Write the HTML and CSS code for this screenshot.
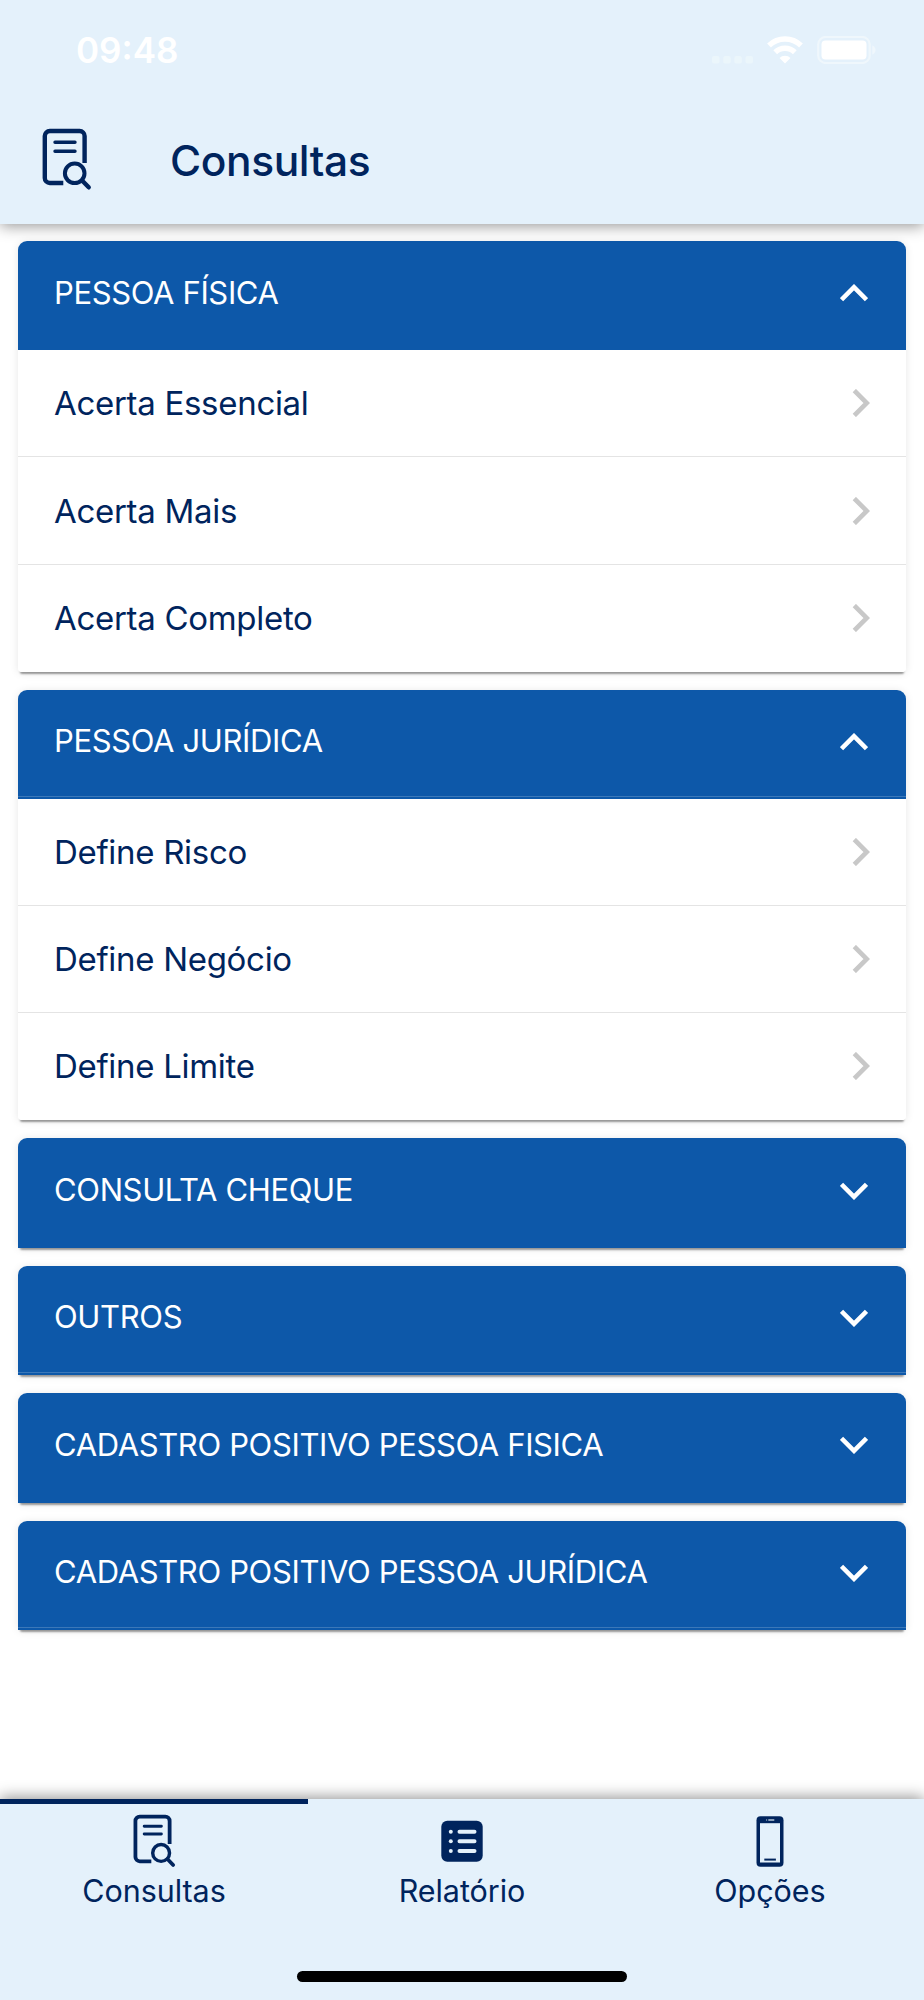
FILE: index.html
```
<!DOCTYPE html>
<html lang="pt-BR">
  <head>
    <meta charset="UTF-8" />
    <meta name="viewport" content="width=device-width, initial-scale=1.0" />
    <title>Consultas</title>
    <link rel="stylesheet" href="styles.css">
  </head>

  <body>
    <!-- shared icons -->
    <svg class="sprite" width="0" height="0">
      <symbol id="doc_search" viewBox="0 0 50 64">
        <g fill="none" stroke="currentColor" stroke-linecap="round">
          <path stroke-width="4.4" stroke-linecap="butt" d="M42.6 35V8a5 5 0 0 0-5-5H7.8a5 5 0 0 0-5 5v42a5 5 0 0 0 5 5H21.3" />
          <path stroke-width="3.4" d="M13 14.3h20M13 23.3h20" />
          <circle cx="32.7" cy="45.3" r="9.8" stroke-width="4" />
          <path stroke-width="4.4" d="M40.3 52.7l6.4 6.6" />
        </g>
      </symbol>
      <symbol id="chevron_up" viewBox="0 0 28 18">
        <path fill="none" stroke="currentColor" stroke-width="4.6" d="M1.5 15.7L14 3.2l12.5 12.5" />
      </symbol>
      <symbol id="chevron_down" viewBox="0 0 28 18">
        <path fill="none" stroke="currentColor" stroke-width="4.6" d="M1.5 2.3L14 14.8 26.5 2.3" />
      </symbol>
      <symbol id="chevron_right" viewBox="0 0 18 28">
        <path fill="none" stroke="currentColor" stroke-width="4.6" d="M2.3 1.5L14.8 14 2.3 26.5" />
      </symbol>
    </svg>

    <div class="main">
      <header class="header">
        <div class="status_bar">
          <span class="time">09:48</span>
          <div class="status_icons">
            <svg class="signal" width="42" height="8" viewBox="0 0 42 8" fill="#ebf6fb">
              <rect x="0" width="7.5" height="7.5" rx="2" />
              <rect x="11.2" width="7.5" height="7.5" rx="2" />
              <rect x="22.3" width="7.5" height="7.5" rx="2" />
              <rect x="33.5" width="7.5" height="7.5" rx="2" />
            </svg>
            <svg class="wifi" width="36" height="28" viewBox="0 0 36 28">
              <g fill="none" stroke="#fff" stroke-width="5.4">
                <path d="M2 9.5a23 23 0 0 1 32 0" />
                <path d="M8.2 16.2a14 14 0 0 1 19.6 0" />
              </g>
              <path fill="#fff" d="M18 27.500l-5.500-5.500a7.800 7.800 0 0 1 11 0z" />
            </svg>
            <svg class="battery" width="59" height="28" viewBox="0 0 59 28">
              <rect x="1.2" y="1" width="51.5" height="26" rx="7.5" fill="none" stroke="#eff7fc" stroke-width="2.200" />
              <rect x="4.5" y="4.5" width="45" height="19" rx="4" fill="#fff" />
              <path fill="#eff7fc" d="M55.3 9.500q3.200 1.200 3.200 4.600t-3.200 4.600z" />
            </svg>
          </div>
        </div>
        <div class="title_bar">
          <svg class="title_icon" width="50" height="64"><use href="#doc_search" /></svg>
          <h1>Consultas</h1>
        </div>
      </header>

      <div class="content">
        <section class="card">
          <div class="card_head"><span>PESSOA FÍSICA</span><svg width="28" height="18"><use href="#chevron_up" /></svg></div>
          <div class="item"><span>Acerta Essencial</span><svg width="18" height="28"><use href="#chevron_right" /></svg></div>
          <div class="item"><span>Acerta Mais</span><svg width="18" height="28"><use href="#chevron_right" /></svg></div>
          <div class="item"><span>Acerta Completo</span><svg width="18" height="28"><use href="#chevron_right" /></svg></div>
        </section>

        <section class="card">
          <div class="card_head"><span>PESSOA JURÍDICA</span><svg width="28" height="18"><use href="#chevron_up" /></svg></div>
          <div class="item"><span>Define Risco</span><svg width="18" height="28"><use href="#chevron_right" /></svg></div>
          <div class="item"><span>Define Negócio</span><svg width="18" height="28"><use href="#chevron_right" /></svg></div>
          <div class="item"><span>Define Limite</span><svg width="18" height="28"><use href="#chevron_right" /></svg></div>
        </section>

        <section class="card">
          <div class="card_head"><span>CONSULTA CHEQUE</span><svg width="28" height="18"><use href="#chevron_down" /></svg></div>
        </section>

        <section class="card">
          <div class="card_head"><span>OUTROS</span><svg width="28" height="18"><use href="#chevron_down" /></svg></div>
        </section>

        <section class="card">
          <div class="card_head"><span>CADASTRO POSITIVO PESSOA FISICA</span><svg width="28" height="18"><use href="#chevron_down" /></svg></div>
        </section>

        <section class="card">
          <div class="card_head"><span>CADASTRO POSITIVO PESSOA JURÍDICA</span><svg width="28" height="18"><use href="#chevron_down" /></svg></div>
        </section>
      </div>

      <footer class="footer">
        <nav class="tabs">
          <div class="tab active">
            <svg width="43" height="55"><use href="#doc_search" /></svg>
            <span>Consultas</span>
          </div>
          <div class="tab">
            <svg width="42" height="55" viewBox="0 0 42 55">
              <rect x=".3" y="6.700" width="41.400" height="41" rx="6" fill="#00245d" />
              <g fill="#e4f1fb">
                <circle cx="9.8" cy="17.7" r="2" />
                <circle cx="9.8" cy="27.3" r="2" />
                <circle cx="9.8" cy="37" r="2" />
              </g>
              <path stroke="#e4f1fb" stroke-width="4" stroke-linecap="round" d="M18.5 17.7h15M18.5 27.3h15M18.5 37h15" />
            </svg>
            <span>Relatório</span>
          </div>
          <div class="tab">
            <svg width="28" height="55" viewBox="0 0 28 55">
              <rect x=".5" y="2.3" width="27" height="50.4" rx="4" fill="#00245d" />
              <rect x="4" y="9.2" width="20" height="39.3" fill="#e4f1fb" />
              <path stroke="#00245d" stroke-width="2" d="M8.3 45.6h11.6" />
              <path stroke="#b5c6d8" stroke-width="1.5" d="M10.3 5.9h.8M12.3 5.9h6" />
            </svg>
            <span>Opções</span>
          </div>
        </nav>
        <div class="home_indicator"></div>
      </footer>
    </div>
  </body>
</html>
```
FILE: styles.css
```
html,
body {
  width: 100%;
  height: 100%;
  margin: 0;
  padding: 0;
  font-family: Inter, "Liberation Sans", sans-serif;
  color: #00245d;
  background-color: #fff;
}

svg {
  display: block;
  flex-shrink: 0;
}

.sprite {
  position: absolute;
}

.main {
  width: 100%;
  height: 2000px;
  display: flex;
  flex-direction: column;
  overflow: hidden;
}

.header {
  height: 223.5px;
  flex-shrink: 0;
  background-color: #e4f1fb;
  box-shadow: 0 2px 14px rgba(0, 0, 0, 0.42);
  z-index: 1;
}

.status_bar {
  height: 100px;
  box-sizing: border-box;
  padding: 0 48px 0 76px;
  display: flex;
  justify-content: space-between;
  align-items: center;
  color: #fff;
}

.time {
  font-size: 35px;
  font-weight: 600;
  letter-spacing: 0;
}

.status_icons {
  display: flex;
  align-items: center;
}

.signal {
  margin: 20px 13.5px 0 0;
}

.battery {
  margin-left: 14px;
}

.title_bar {
  height: 123px;
  display: flex;
  align-items: center;
  padding-left: 42px;
}

.title_icon {
  margin-bottom: 3px;
}

h1 {
  margin: 0 0 2px 78px;
  font-size: 42.5px;
  line-height: 50px;
  font-weight: 500;
  letter-spacing: -0.4px;
}

.content {
  flex: 1;
  display: flex;
  flex-direction: column;
  gap: 18px;
  padding: 17.5px 18px 0;
}

.card {
  border-radius: 9px 9px 4px 4px;
  box-shadow: 0 4px 2px -2px rgba(0, 0, 0, 0.38), 0 1px 9px rgba(0, 0, 0, 0.1);
}

.card_head {
  height: 109.4px;
  box-sizing: border-box;
  padding: 0 38px 5px 36px;
  display: flex;
  justify-content: space-between;
  align-items: center;
  color: #fff;
  background-color: #0d58a9;
  border-radius: 9px 9px 0 0;
  font-size: 31px;
  letter-spacing: -0.36px;
}

.card_head span {
  padding-bottom: 2px;
}

/* thin seam above the bottom edge */
.card:nth-child(even) .card_head {
  background-image: linear-gradient(#3b78b9, #3b78b9);
  background-size: 100% 1px;
  background-position: 0 106px;
  background-repeat: no-repeat;
}

.item {
  height: 107.1px;
  box-sizing: border-box;
  padding: 0 36px;
  display: flex;
  justify-content: space-between;
  align-items: center;
  background-color: #fff;
  border-bottom: 1px solid #e4e4e4;
  font-size: 33px;
  letter-spacing: -0.3px;
}

.item:last-child {
  border-bottom-color: #fff;
  border-radius: 0 0 4px 4px;
}

.item svg {
  color: #c8c8c8;
}

.footer {
  height: 201px;
  flex-shrink: 0;
  background-color: #e4f1fb;
  box-shadow: 0 -2px 14px rgba(0, 0, 0, 0.42);
}

.tabs {
  display: grid;
  grid-template-columns: repeat(3, 1fr);
  height: 172px;
}

.tab {
  display: flex;
  flex-direction: column;
  align-items: center;
  padding-top: 10px;
  border-top: 5px solid transparent;
  font-size: 30.5px;
  line-height: 36px;
  letter-spacing: -0.05px;
}

.tab span {
  margin-top: 4px;
}

.active {
  border-color: #00245d;
}

.home_indicator {
  width: 330px;
  height: 11px;
  margin: 0 auto;
  border-radius: 6px;
  background-color: #000;
}
```
